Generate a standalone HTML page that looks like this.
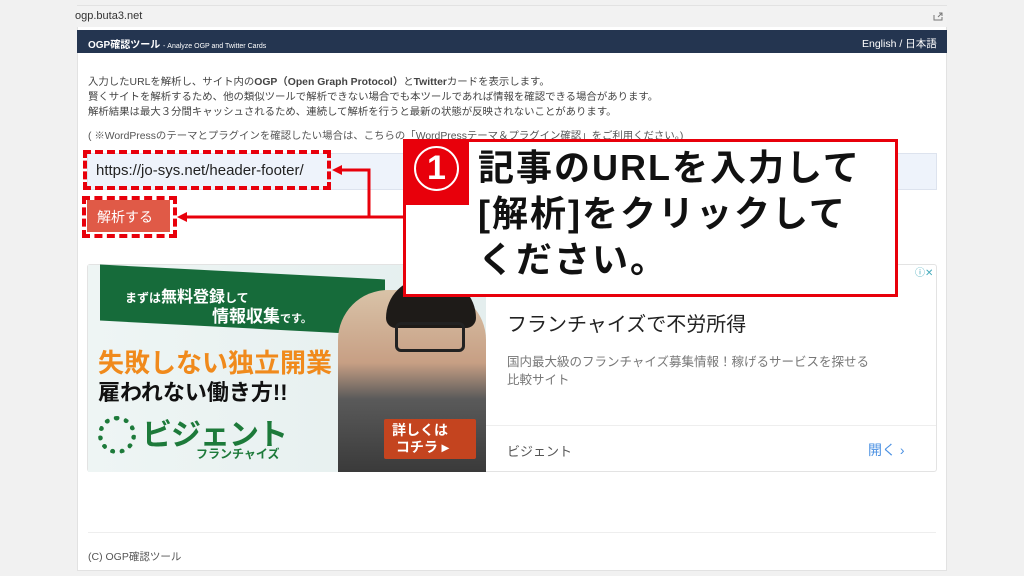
<!DOCTYPE html>
<html><head><meta charset="utf-8"><style>
*{margin:0;padding:0;box-sizing:border-box}
body{width:1024px;height:576px;background:#f1f1f1;position:relative;overflow:hidden;font-family:"Liberation Sans","Noto Sans CJK JP",sans-serif}
.abs{position:absolute}
</style></head><body>
<div class="abs" style="left:77px;top:5px;width:870px;height:566px;background:#fff;border:1px solid #e2e2e2"></div>
<div class="abs" style="left:77px;top:6px;width:870px;height:21px;background:#f2f2f2"></div>
<div class="abs" style="left:75px;top:10px;font-size:11px;color:#333">ogp.buta3.net</div>
<svg class="abs" style="left:932px;top:10px" width="12" height="12" viewBox="0 0 12 12"><path d="M2 5v5h8V7M6 7l4-4M7 3h3v3" fill="none" stroke="#777" stroke-width="1"/></svg>
<div class="abs" style="left:77px;top:30px;width:870px;height:23px;background:#243550"></div>
<div class="abs" style="left:88px;top:36px;font-size:10px;color:#fff;font-weight:bold">OGP確認ツール <span style="font-weight:normal;font-size:7px">- Analyze OGP and Twitter Cards</span></div>
<div class="abs" style="left:862px;top:36px;font-size:10.5px;color:#fff">English / 日本語</div>
<div class="abs" style="left:88px;top:75px;font-size:10.4px;color:#444;line-height:15px;white-space:nowrap">入力したURLを解析し、サイト内の<b>OGP（Open Graph Protocol）</b>と<b>Twitter</b>カードを表示します。<br>賢くサイトを解析するため、他の類似ツールで解析できない場合でも本ツールであれば情報を確認できる場合があります。<br>解析結果は最大３分間キャッシュされるため、連続して解析を行うと最新の状態が反映されないことがあります。</div>
<div class="abs" style="left:88px;top:127px;font-size:10.4px;color:#555;white-space:nowrap">( ※WordPressのテーマとプラグインを確認したい場合は、こちらの「WordPressテーマ＆プラグイン確認」をご利用ください。)</div>
<div class="abs" style="left:87px;top:153px;width:850px;height:37px;background:#eef3fb;border:1px solid #dde3ee"></div>
<div class="abs" style="left:83px;top:150px;width:248px;height:40px;border:4px dashed #e8000b"></div>
<div class="abs" style="left:96px;top:162px;font-size:15px;color:#222">https://jo-sys.net/header-footer/</div>
<div class="abs" style="left:87px;top:200px;width:83px;height:32px;background:#e05a47"></div>
<div class="abs" style="left:97px;top:207px;font-size:14px;color:#fff">解析する</div>
<div class="abs" style="left:82px;top:196px;width:95px;height:42px;border:4px dashed #e8000b"></div>
<svg class="abs" style="left:0;top:0" width="1024" height="576">
<path d="M405 217H182M369 217V170H336" fill="none" stroke="#e8000b" stroke-width="3"/>
<path d="M332 170l10-5v10zM177 217l10-5v10z" fill="#e8000b"/>
</svg>
<div class="abs" style="left:87px;top:264px;width:850px;height:208px;border:1px solid #e3e3e3;border-radius:3px;background:#fff"></div>
<div class="abs" style="left:88px;top:265px;width:398px;height:207px;background:linear-gradient(90deg,#eef5f4,#e4eeee)"></div>
<div class="abs" style="left:100px;top:272px;width:285px;height:56px;background:#166b3a;transform:skewY(3deg)"></div>
<div class="abs" style="left:125px;top:283px;font-size:12px;color:#fff;font-weight:bold">まずは<span style="font-size:16px">無料登録</span>して</div>
<div class="abs" style="left:212px;top:302px;font-size:17px;color:#fff;font-weight:bold">情報収集<span style="font-size:11px">です。</span></div>
<div class="abs" style="left:98px;top:343px;font-size:26px;color:#f08a1c;font-weight:bold">失敗しない独立開業</div>
<div class="abs" style="left:98px;top:375px;font-size:22px;color:#111;font-weight:bold">雇われない働き方!!</div>
<div class="abs" style="left:98px;top:416px;width:38px;height:38px;border:5px dotted #1d7a3a;border-radius:50%"></div>
<div class="abs" style="left:142px;top:410px;font-size:30px;color:#1d7a3a;font-weight:bold;letter-spacing:-1px">ビジェント</div>
<div class="abs" style="left:196px;top:445px;font-size:12px;color:#1d7a3a;font-weight:bold">フランチャイズ</div>
<div class="abs" style="left:338px;top:290px;width:148px;height:182px;background:linear-gradient(180deg,#d9c3a8 0,#c79f84 40%,#5a5a5a 60%,#3a3a3a 100%);border-radius:50px 50px 0 0"></div>
<div class="abs" style="left:386px;top:278px;width:90px;height:50px;background:#1e1b18;border-radius:40px 40px 10px 10px"></div>
<div class="abs" style="left:395px;top:322px;width:70px;height:30px;border:3px solid #222;border-radius:6px"></div>
<div class="abs" style="left:384px;top:419px;width:92px;height:40px;background:#c4441f;border-radius:2px;color:#fff;font-weight:bold;font-size:14px;line-height:17px;padding:3px 0 0 8px">詳しくは<br>&nbsp;コチラ ▸</div>
<div class="abs" style="left:507px;top:308px;font-size:20px;color:#222">フランチャイズで不労所得</div>
<div class="abs" style="left:507px;top:353px;font-size:12.5px;color:#777;line-height:18px">国内最大級のフランチャイズ募集情報！稼げるサービスを探せる<br>比較サイト</div>
<div class="abs" style="left:486px;top:425px;width:450px;height:1px;background:#eee"></div>
<div class="abs" style="left:507px;top:441px;font-size:13px;color:#555">ビジェント</div>
<div class="abs" style="left:868px;top:440px;font-size:14px;color:#4a90e2">開く ›</div>
<div class="abs" style="left:915px;top:264px;font-size:10px;color:#4ab">ⓘ✕</div>
<div class="abs" style="left:88px;top:532px;width:848px;height:1px;background:#eee"></div>
<div class="abs" style="left:88px;top:549px;font-size:10.5px;color:#555">(C) OGP確認ツール</div>
<div class="abs" style="left:403px;top:139px;width:495px;height:158px;background:#fff;border:3px solid #e8000b"></div>
<div class="abs" style="left:403px;top:139px;width:66px;height:66px;background:#e8000b"></div>
<div class="abs" style="left:414px;top:146px;width:45px;height:45px;border:2.5px solid #fff;border-radius:50%;color:#fff;font-size:34px;font-weight:bold;text-align:center;line-height:40px">1</div>
<div class="abs" style="left:478px;top:145px;font-size:36px;font-weight:bold;color:#111;line-height:46px;letter-spacing:2px">記事のURLを入力して<br>[解析]をクリックして<br>ください。</div>
</body></html>
